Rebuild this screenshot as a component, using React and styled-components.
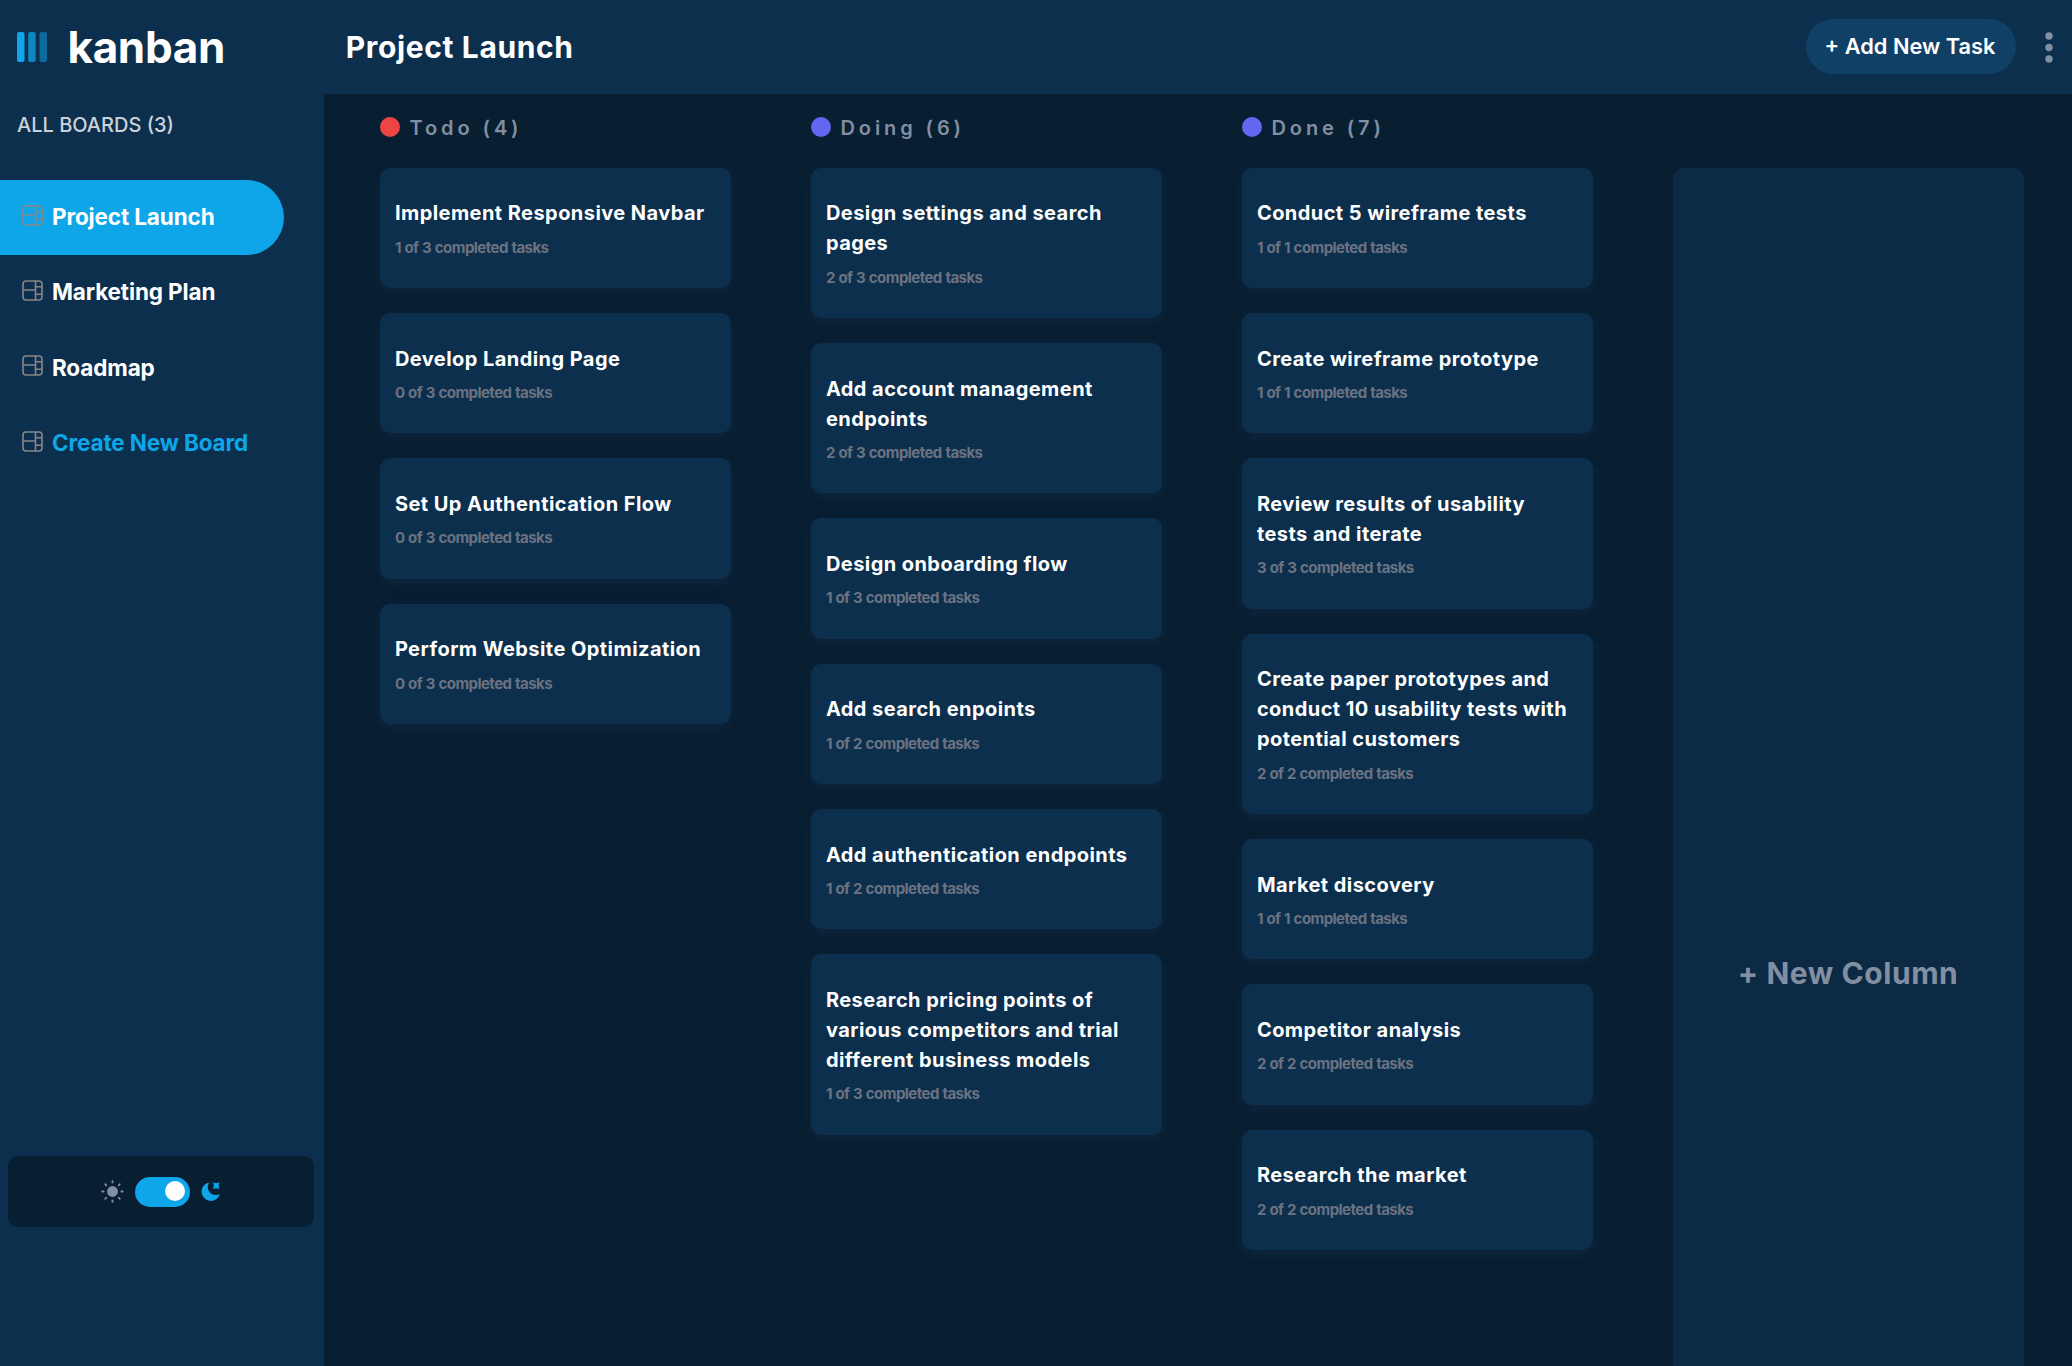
import React from "react";
import styled, { createGlobalStyle } from "styled-components";

const color = {
  canvas: "#081e31",
  panel: "#0c2f4d",
  ghost: "#0c2a43",
  accent: "#0ea5e9",
  button: "#114066",
  muted: "#828fa3",
};

const GlobalStyle = createGlobalStyle`
  *, *::before, *::after { box-sizing: border-box; }
  body {
    margin: 0;
    background: ${color.canvas};
    color: #fff;
    font-family: Inter, "Liberation Sans", sans-serif;
    -webkit-font-smoothing: antialiased;
  }
`;

const Page = styled.div`
  display: flex;
  width: 100%;
  height: 100vh;
  overflow: hidden;
`;

const Sidebar = styled.aside`
  flex: 0 0 324px;
  display: flex;
  flex-direction: column;
  background: ${color.panel};
`;

const Brand = styled.div`
  display: flex;
  align-items: center;
  gap: 20.5px;
  height: 94px;
  padding-left: 17px;
`;

const LogoMark = styled.svg`
  width: 30px;
  height: 30px;
`;

const BrandName = styled.span`
  font-size: 44px;
  line-height: 50px;
  font-weight: 700;
  letter-spacing: -0.35px;
`;

const BoardsHeading = styled.h2`
  margin: 16px 0 39.8px;
  padding-left: 17px;
  font-size: 20px;
  line-height: 30px;
  font-weight: 500;
  color: #cbd1d9;
`;

const BoardList = styled.nav`
  flex: 1;
  display: flex;
  flex-direction: column;
`;

const BoardLink = styled.a`
  display: flex;
  align-items: center;
  gap: 10px;
  width: 284px;
  height: 75.3px;
  padding: 0 0 1.6px 22px;
  border-radius: 0 38px 38px 0;
  background: ${(p) => (p.$active ? color.accent : "transparent")};
  color: ${(p) => (p.$create ? color.accent : "#fff")};
  font-size: 22.5px;
  font-weight: 650;
  letter-spacing: -0.13px;
  white-space: nowrap;
`;

const LinkIcon = styled.svg`
  width: 21px;
  height: 21px;
  margin-right: -1px;
  margin-bottom: 3px;
`;

const ThemeBox = styled.div`
  display: flex;
  align-items: center;
  justify-content: center;
  gap: 11px;
  height: 71px;
  margin: 0 10px 139px 7.5px;
  border-radius: 10px;
  background: ${color.canvas};
`;

const ThemeIcon = styled.svg`
  width: ${(p) => p.$size}px;
  height: ${(p) => p.$size}px;
  margin-bottom: 1px;
`;

const Switch = styled.button`
  display: flex;
  justify-content: flex-end;
  align-items: center;
  width: 55px;
  height: 30px;
  padding: 0 5px 1px 0;
  border: 0;
  border-radius: 15px;
  background: ${color.accent};
`;

const Knob = styled.span`
  width: 20px;
  height: 20px;
  border-radius: 50%;
  background: #fff;
`;

const Main = styled.main`
  flex: 1;
  min-width: 0;
  display: flex;
  flex-direction: column;
`;

const TopBar = styled.header`
  flex: 0 0 94px;
  display: flex;
  align-items: center;
  justify-content: space-between;
  padding: 0 19px 0 21.8px;
  background: ${color.panel};
`;

const BoardTitle = styled.h1`
  margin: 0 0 1px;
  font-size: 30px;
  line-height: 38px;
  font-weight: 650;
  letter-spacing: 0.62px;
`;

const Actions = styled.div`
  display: flex;
  align-items: center;
  gap: 29px;
`;

const AddTask = styled.button`
  width: 210px;
  height: 55px;
  margin-bottom: 1px;
  padding: 0 2px 1px 0;
  border: 0;
  border-radius: 28px;
  background: ${color.button};
  color: #fff;
  font-family: inherit;
  font-size: 21.8px;
  font-weight: 600;
`;

const Dots = styled.svg`
  width: 8px;
  height: 31px;
`;

const Board = styled.section`
  flex: 1;
  min-height: 0;
  display: grid;
  grid-template-columns: repeat(4, 351px);
  column-gap: 80px;
  align-items: start;
  padding: 18.5px 0 0 55.6px;
  overflow: hidden;
`;

const Column = styled.div`
  display: flex;
  flex-direction: column;
  gap: 25px;
`;

const ColumnHeading = styled.h3`
  display: flex;
  align-items: center;
  gap: 9.5px;
  height: 30px;
  margin: 0;
  font-size: 20px;
  font-weight: 600;
  letter-spacing: 3.9px;
  color: ${color.muted};
`;

const ColumnDot = styled.span`
  width: 20.4px;
  height: 20.4px;
  margin-bottom: 1px;
  border-radius: 50%;
  background: ${(p) => p.$fill};
`;

const Card = styled.article`
  padding: 30.7px 15.3px 30.3px;
  border-radius: 10px;
  background: ${color.panel};
  box-shadow: 0 5px 14px rgba(54, 78, 126, 0.15);
`;

const CardTitle = styled.h4`
  margin: 0 0 9.4px;
  font-size: 20px;
  line-height: 30px;
  font-weight: 650;
  letter-spacing: 0.44px;
`;

const CardProgress = styled.p`
  margin: 0;
  font-size: 15px;
  line-height: 20px;
  font-weight: 650;
  letter-spacing: -0.55px;
  word-spacing: 0.6px;
  color: #6b7280;
`;

const NewColumn = styled.button`
  height: 1611px;
  margin-top: 55.5px;
  padding: 0 0 1px;
  border: 0;
  border-radius: 10px;
  background: ${color.ghost};
  color: ${color.muted};
  font-family: inherit;
  font-size: 30px;
  font-weight: 650;
  letter-spacing: 0.55px;
`;

const columns = [
  {
    name: "Todo",
    fill: "#ef4444",
    tasks: [
      ["Implement Responsive Navbar", 1, 3],
      ["Develop Landing Page", 0, 3],
      ["Set Up Authentication Flow", 0, 3],
      ["Perform Website Optimization", 0, 3],
    ],
  },
  {
    name: "Doing",
    fill: "#6366f1",
    tasks: [
      ["Design settings and search pages", 2, 3],
      ["Add account management endpoints", 2, 3],
      ["Design onboarding flow", 1, 3],
      ["Add search enpoints", 1, 2],
      ["Add authentication endpoints", 1, 2],
      ["Research pricing points of various competitors and trial different business models", 1, 3],
    ],
  },
  {
    name: "Done",
    fill: "#6366f1",
    tasks: [
      ["Conduct 5 wireframe tests", 1, 1],
      ["Create wireframe prototype", 1, 1],
      ["Review results of usability tests and iterate", 3, 3],
      ["Create paper prototypes and conduct 10 usability tests with potential customers", 2, 2],
      ["Market discovery", 1, 1],
      ["Competitor analysis", 2, 2],
      ["Research the market", 2, 2],
    ],
  },
];

const boards = ["Project Launch", "Marketing Plan", "Roadmap"];

function BoardIcon() {
  return (
    <LinkIcon viewBox="0 0 21 21" fill="none" stroke="#868686" strokeWidth="1.6">
      <rect x="1" y="1" width="19" height="19" rx="3" />
      <path d="M13.5 1v19M1 10h12.5M13.5 6.7H20M13.5 14.2H20" />
    </LinkIcon>
  );
}

function SunIcon() {
  return (
    <ThemeIcon $size={23} viewBox="-11.5 -11.5 23 23" fill={color.muted}>
      <circle r="5.4" />
      {[0, 45, 90, 135, 180, 225, 270, 315].map((a) => (
        <rect key={a} x="-0.9" y="-11.2" width="1.8" height="3.2" rx="0.8" transform={`rotate(${a})`} />
      ))}
    </ThemeIcon>
  );
}

function MoonIcon() {
  return (
    <ThemeIcon $size={19} viewBox="0 0 19 19" fill={color.accent}>
      <path d="M8.4 0.4A9.3 9.3 0 1 0 18.8 12.2C14.5 14 9.8 12.5 7.8 9C6.2 6.1 6.6 2.7 8.4 0.4Z" />
      <path d="M12 0.3C14.2 1.4 16.4 1.4 18.6 0.3C17.5 2.5 17.5 4.7 18.6 7C16.4 5.9 14.2 5.9 12 7C13.1 4.7 13.1 2.5 12 0.3Z" />
    </ThemeIcon>
  );
}

export default function App() {
  return (
    <>
      <GlobalStyle />
      <Page>
        <Sidebar>
          <Brand>
            <LogoMark viewBox="0 0 30 30" fill={color.accent}>
              <rect width="7.5" height="30" rx="2" />
              <rect x="11.2" width="7.5" height="30" rx="2" opacity="0.75" />
              <rect x="22.5" width="7.5" height="30" rx="2" opacity="0.5" />
            </LogoMark>
            <BrandName>kanban</BrandName>
          </Brand>
          <BoardsHeading>ALL BOARDS (3)</BoardsHeading>
          <BoardList>
            {boards.map((name, i) => (
              <BoardLink key={name} $active={i === 0}>
                <BoardIcon />
                {name}
              </BoardLink>
            ))}
            <BoardLink $create>
              <BoardIcon />
              Create New Board
            </BoardLink>
          </BoardList>
          <ThemeBox>
            <SunIcon />
            <Switch aria-label="Toggle dark mode">
              <Knob />
            </Switch>
            <MoonIcon />
          </ThemeBox>
        </Sidebar>
        <Main>
          <TopBar>
            <BoardTitle>Project Launch</BoardTitle>
            <Actions>
              <AddTask>+ Add New Task</AddTask>
              <Dots viewBox="0 0 8 31" fill={color.muted}>
                <circle cx="4" cy="4" r="3.7" />
                <circle cx="4" cy="15.5" r="3.7" />
                <circle cx="4" cy="27" r="3.7" />
              </Dots>
            </Actions>
          </TopBar>
          <Board>
            {columns.map((col) => (
              <Column key={col.name}>
                <ColumnHeading>
                  <ColumnDot $fill={col.fill} />
                  {col.name} ({col.tasks.length})
                </ColumnHeading>
                {col.tasks.map(([title, done, total]) => (
                  <Card key={title}>
                    <CardTitle>{title}</CardTitle>
                    <CardProgress>
                      {done} of {total} completed tasks
                    </CardProgress>
                  </Card>
                ))}
              </Column>
            ))}
            <NewColumn>+ New Column</NewColumn>
          </Board>
        </Main>
      </Page>
    </>
  );
}
